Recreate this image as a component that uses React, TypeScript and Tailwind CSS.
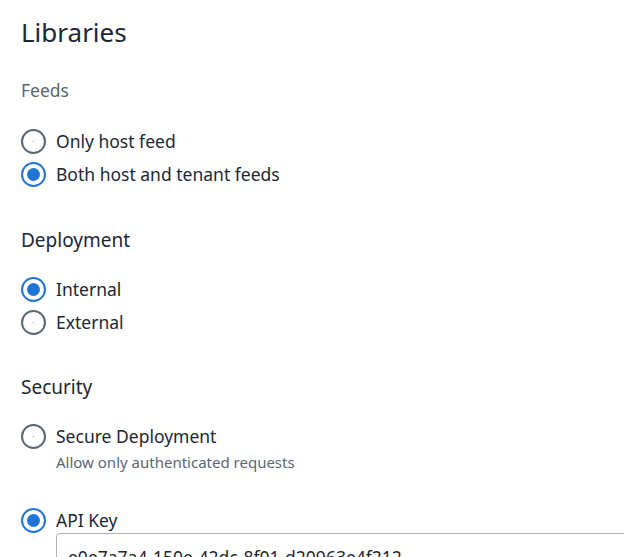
import React, { useState } from "react";

interface RadioProps {
  checked: boolean;
  label: string;
  hint?: string;
  onSelect: () => void;
}

function Radio({ checked, label, hint, onSelect }: RadioProps) {
  return (
    <label className="flex items-start gap-[10px] cursor-pointer" onClick={onSelect}>
      <span
        className={
          checked
            ? "mt-[4px] flex h-[25px] w-[25px] flex-shrink-0 items-center justify-center rounded-full border-2 border-[#1f74d6]"
            : "mt-[4px] flex h-[25px] w-[25px] flex-shrink-0 items-center justify-center rounded-full border-2 border-[#5b6670]"
        }
      >
        {checked ? (
          <span className="h-[13px] w-[13px] rounded-full bg-[#1f74d6]" />
        ) : (
          <span className="h-[1px] w-[1px] rounded-full bg-[#1f74d6]" />
        )}
      </span>
      <span className="flex flex-col">
        <span className="text-[17.5px] leading-[33px] text-[#1d2733]">{label}</span>
        {hint && (
          <span className="-mt-[1px] text-[15px] leading-[20px] text-[#5c6773]">{hint}</span>
        )}
      </span>
    </label>
  );
}

export default function App() {
  const [feed, setFeed] = useState("both");
  const [deploy, setDeploy] = useState("internal");
  const [security, setSecurity] = useState("apikey");

  return (
    <div className="min-h-screen overflow-hidden bg-white pl-[21px] pt-[14px] font-['Noto_Sans',sans-serif]">
      <h1 className="text-[26px] leading-[36px] text-[#1d2733]">Libraries</h1>

      {/* Feeds */}
      <h2 className="mt-[28px] text-[17.5px] leading-[24px] text-[#5c6773]">Feeds</h2>
      <div className="mt-[23px] flex flex-col">
        <Radio checked={feed === "host"} label="Only host feed" onSelect={() => setFeed("host")} />
        <Radio checked={feed === "both"} label="Both host and tenant feeds" onSelect={() => setFeed("both")} />
      </div>

      {/* Deployment */}
      <h2 className="mt-[37px] text-[19px] leading-[24px] text-[#1d2733]">Deployment</h2>
      <div className="mt-[21px] flex flex-col">
        <Radio checked={deploy === "internal"} label="Internal" onSelect={() => setDeploy("internal")} />
        <Radio checked={deploy === "external"} label="External" onSelect={() => setDeploy("external")} />
      </div>

      {/* Security */}
      <h2 className="mt-[36px] text-[19px] leading-[24px] text-[#1d2733]">Security</h2>
      <div className="mt-[21px] flex flex-col gap-[32px]">
        <Radio
          checked={security === "secure"}
          label="Secure Deployment"
          hint="Allow only authenticated requests"
          onSelect={() => setSecurity("secure")}
        />
        <div className="flex flex-col">
          <Radio checked={security === "apikey"} label="API Key" onSelect={() => setSecurity("apikey")} />
          <div className="-mt-[4px] ml-[35px] w-[600px] rounded-tl-[4px] border border-[#a9b1ba] px-[11px] pt-[11px] pb-[8px] text-[17.5px] leading-[24px] text-[#1d2733]">
            e0e7a7a4-150e-42dc-8f01-d20963e4f212
          </div>
        </div>
      </div>
    </div>
  );
}
